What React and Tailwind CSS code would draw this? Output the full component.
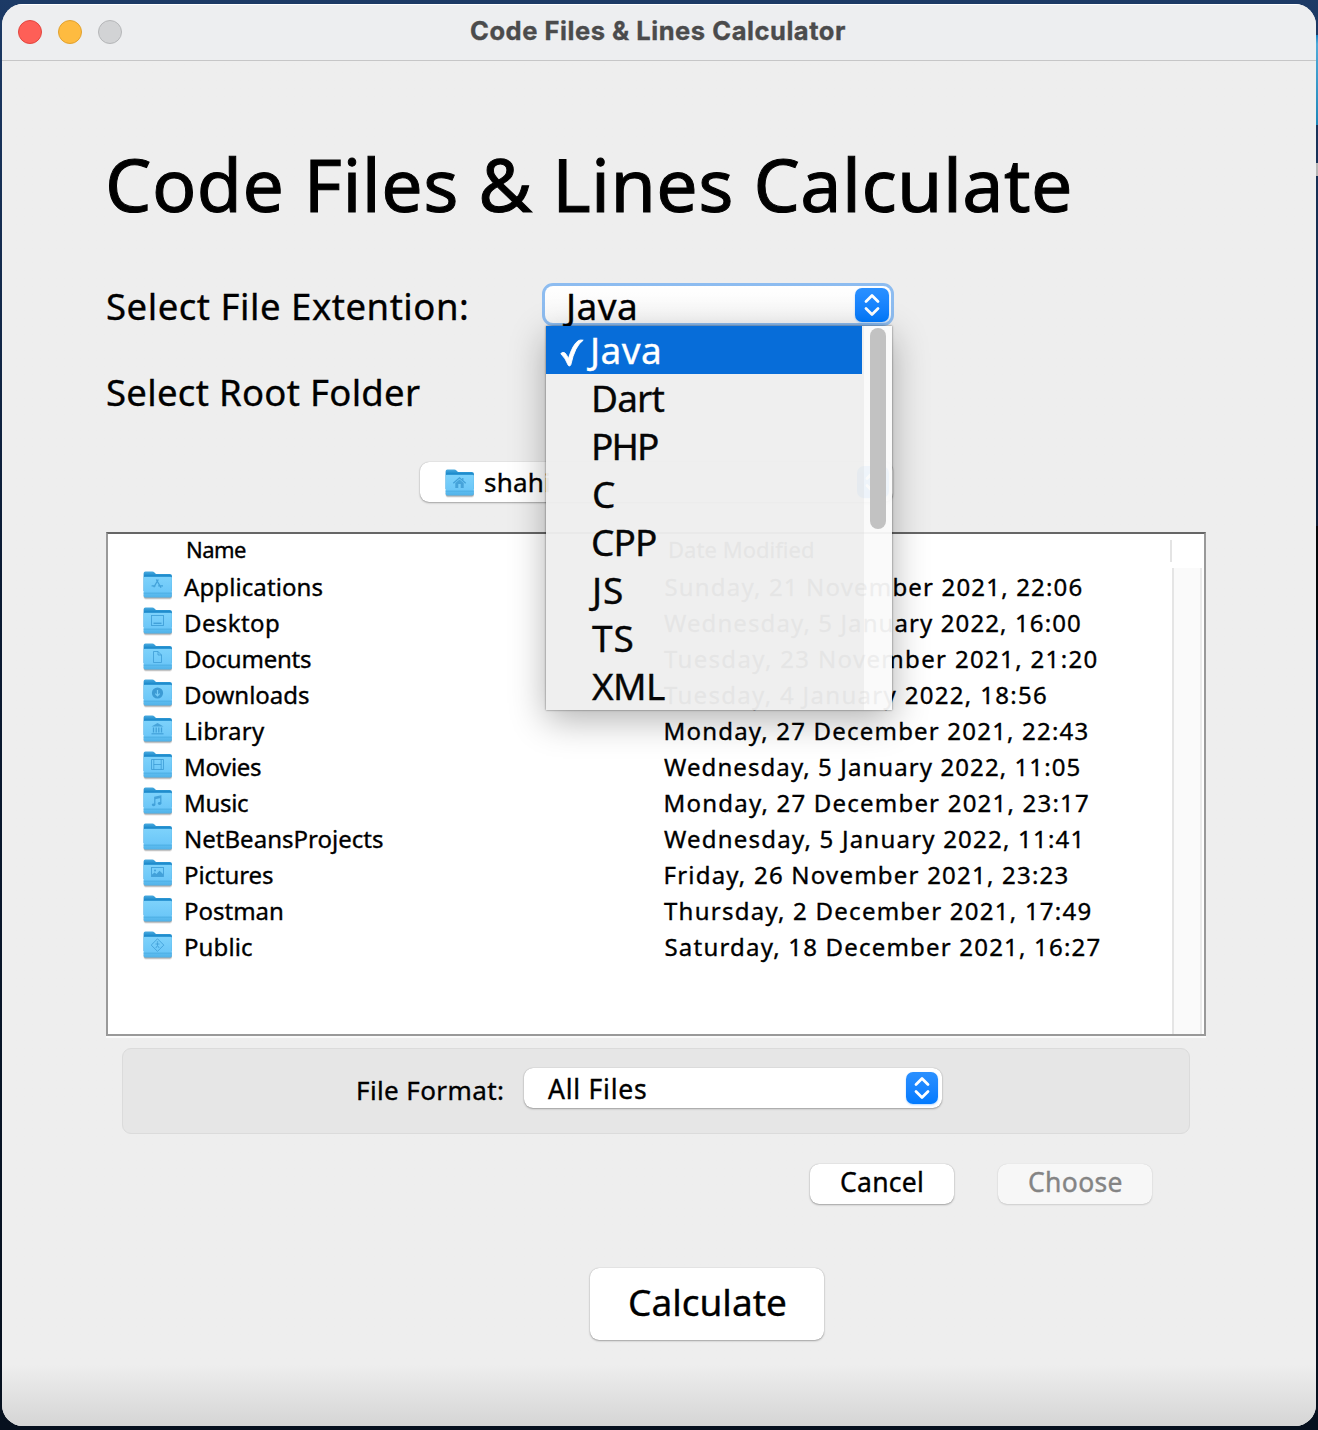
import React, { useLayoutEffect, useRef, useState } from "react";

/* A line of text whose letters are tracked so that it spans the given width. */
function Fit({ w, className = "", children }) {
  const ref = useRef(null);
  const [fit, setFit] = useState({ letterSpacing: 0, marginLeft: 0 });
  useLayoutEffect(() => {
    const cs = getComputedStyle(ref.current);
    const ctx = document.createElement("canvas").getContext("2d");
    ctx.font = `${cs.fontWeight} ${cs.fontSize} ${cs.fontFamily}`;
    const m = ctx.measureText(children);
    const ink = m.actualBoundingBoxLeft + m.actualBoundingBoxRight;
    const n = children.length - 1;
    setFit({
      letterSpacing: n > 0 ? (w - ink) / n : 0,
      marginLeft: m.actualBoundingBoxLeft,
    });
  }, [w, children]);
  return (
    <span
      ref={ref}
      className={"block shrink-0 whitespace-pre " + className}
      style={{ ...fit, width: w }}
    >
      {children}
    </span>
  );
}

const symbols = {
  apps: (
    <g strokeWidth="1.3">
      <path d="M15.3 8.5 L10.8 16.3 M13.3 8.5 L18 16.8 M8.6 14.8 H12.6 M15.2 14.8 H20" />
    </g>
  ),
  desktop: (
    <g>
      <rect x="8.5" y="8.5" width="12" height="10" />
      <path d="M10.5 16.3 H18.5" strokeWidth="1.4" />
    </g>
  ),
  document: <path d="M10.5 8.5 H15 L18.5 12 V19.5 H10.5 Z M15 8.5 V12 H18.5" />,
  download: (
    <g>
      <circle cx="14.5" cy="14" r="5.6" fill="#3393ce" stroke="none" />
      <path d="M14.5 11 V16.5 M12.3 14.6 L14.5 16.8 L16.7 14.6" stroke="#78cdf8" strokeWidth="1.2" />
    </g>
  ),
  library: (
    <g>
      <path d="M8.5 11.5 L14.5 8 L20.5 11.5 Z" fill="#3f9dd5" stroke="none" />
      <path d="M10.5 12.5 V17.5 M13.2 12.5 V17.5 M15.8 12.5 V17.5 M18.5 12.5 V17.5" strokeWidth="1.3" />
      <path d="M8.5 18.8 H20.5" strokeWidth="1.2" />
    </g>
  ),
  movies: (
    <path d="M8.5 8.5 H20.5 V18.5 H8.5 Z M10.8 8.5 V18.5 M18.2 8.5 V18.5 M10.8 13.5 H18.2" />
  ),
  music: (
    <g>
      <path d="M11.8 17.5 V10.3 L17.8 9 V16.2" strokeWidth="1.2" />
      <path d="M11.8 11.4 L17.8 10.1" strokeWidth="1.6" />
      <ellipse cx="10.6" cy="17.8" rx="1.8" ry="1.4" fill="#3a9ad4" stroke="none" />
      <ellipse cx="16.6" cy="16.5" rx="1.8" ry="1.4" fill="#3a9ad4" stroke="none" />
    </g>
  ),
  pictures: (
    <g>
      <rect x="8.5" y="8.5" width="12" height="9" />
      <path d="M9 17.5 V15.5 L11.5 13.5 L13.5 15 L16.5 11.8 L20 15 V17.5 Z" fill="#3a9ad4" stroke="none" />
      <circle cx="12" cy="11.5" r="1" fill="#3a9ad4" stroke="none" />
    </g>
  ),
  public: (
    <g>
      <path d="M14.5 7.8 L20.8 14.1 L14.5 20.4 L8.2 14.1 Z" />
      <circle cx="14.5" cy="11" r="0.8" fill="#3a9ad4" stroke="none" />
      <path d="M12.5 13 H16.5 M14.5 12 V14.5 L12.8 17 M14.5 14.5 L16.2 17" strokeWidth="0.9" />
    </g>
  ),
  home: (
    <g>
      <path d="M8.3 14.2 L14.5 8.8 L20.7 14.2" strokeWidth="1.3" />
      <path d="M10.3 14 L14.5 10.4 L18.7 14 V19 H10.3 Z" fill="#3f9dd5" stroke="none" />
      <path d="M17.8 9 V11.2" strokeWidth="1.2" />
      <rect x="13.3" y="15" width="2.4" height="4" fill="#78cdf8" stroke="none" />
    </g>
  ),
};

function Folder({ kind }) {
  return (
    <svg width="30" height="30" viewBox="0 0 30 30" className="block shrink-0">
      <defs>
        <linearGradient id="folderBack" x1="0" y1="0" x2="0" y2="1">
          <stop offset="0" stopColor="#4aabe0" />
          <stop offset="0.25" stopColor="#1585c8" />
          <stop offset="1" stopColor="#1585c8" />
        </linearGradient>
        <linearGradient id="folderFront" x1="0" y1="0" x2="0" y2="1">
          <stop offset="0" stopColor="#7dd2fb" />
          <stop offset="0.72" stopColor="#6cc7f8" />
          <stop offset="0.8" stopColor="#5dbcf0" />
          <stop offset="1" stopColor="#50b2e8" />
        </linearGradient>
      </defs>
      <rect x="0.6" y="22" width="28.4" height="6.4" rx="2" fill="#000" opacity="0.12" />
      <rect x="0.8" y="22" width="28" height="5.4" rx="1.8" fill="#000" opacity="0.25" />
      <path
        d="M0.6 2.4 Q0.6 0.6 2.4 0.6 H9.3 Q10.6 0.6 11.5 1.5 L12.4 2.4 Q13.1 3 14.2 3 H26.9 Q28.9 3 28.9 4.8 V20 H0.6 Z"
        fill="url(#folderBack)"
      />
      <path
        d="M0.6 7 Q0.6 5.8 1.8 5.8 H27.7 Q28.9 5.8 28.9 7 V24.8 Q28.9 26.6 27.1 26.6 H2.4 Q0.6 26.6 0.6 24.8 Z"
        fill="url(#folderFront)"
      />
      <path d="M0.6 22.2 H28.9" stroke="#4aabe2" strokeWidth="0.8" />
      <g fill="none" stroke="#3a9ad4" strokeWidth="0.9" opacity="0.85">
        {symbols[kind]}
      </g>
    </svg>
  );
}

function Stepper({ className = "h-8 w-8" }) {
  return (
    <span
      className={
        "flex shrink-0 items-center justify-center rounded-[7px] bg-linear-to-b from-[#2a90ff] to-[#007aff] shadow-[0_1px_2px_rgba(0,122,255,0.3)] " +
        className
      }
    >
      <svg width="16" height="24" viewBox="0 0 16 24" fill="none" stroke="#fff" strokeWidth="2.8" strokeLinecap="round" strokeLinejoin="round">
        <path d="M2 8.5 L8 2.5 L14 8.5 M2 15.5 L8 21.5 L14 15.5" />
      </svg>
    </span>
  );
}

const box = "rounded-[9px] bg-white shadow-[0_0_1px_rgba(0,0,0,0.3),0_1px_2px_rgba(0,0,0,0.3)] ";

const options = [
  ["Java", "pl-[41px]", 72],
  ["Dart", "pl-[48px]", 70.5],
  ["PHP", "pl-[48px]", 64],
  ["C", "pl-[48px]", 23],
  ["CPP", "pl-[47px]", 63],
  ["JS", "pl-[43px]", 33],
  ["TS", "pl-[46px]", 40.5],
  ["XML", "pl-[46px]", 73],
];

const files = [
  ["Applications", 138.5, "apps", "Sunday, 21 November 2021, 22:06", 416],
  ["Desktop", 93, "desktop", "Wednesday, 5 January 2022, 16:00", 416],
  ["Documents", 125, "document", "Tuesday, 23 November 2021, 21:20", 432.5],
  ["Downloads", 123, "download", "Tuesday, 4 January 2022, 18:56", 382],
  ["Library", 79, "library", "Monday, 27 December 2021, 22:43", 422],
  ["Movies", 75, "movies", "Wednesday, 5 January 2022, 11:05", 415.5],
  ["Music", 62, "music", "Monday, 27 December 2021, 23:17", 422.5],
  ["NetBeansProjects", 197, "plain", "Wednesday, 5 January 2022, 11:41", 415.5],
  ["Pictures", 87, "pictures", "Friday, 26 November 2021, 23:23", 402],
  ["Postman", 96, "plain", "Thursday, 2 December 2021, 17:49", 426.5],
  ["Public", 66, "public", "Saturday, 18 December 2021, 16:27", 434],
];

function TitleBar() {
  return (
    <header className="flex h-[57px] shrink-0 items-start border-b border-t border-b-[#c6c6c7] border-t-white bg-[#edeef0] pl-4 pt-[15px]">
      <span className="h-6 w-6 rounded-full border border-[#e2463f] bg-[#fe5f57]" />
      <span className="ml-4 h-6 w-6 rounded-full border border-[#e1a12f] bg-[#febb40]" />
      <span className="ml-4 h-6 w-6 rounded-full border border-[#b5b6b8] bg-[#d2d3d5]" />
      <div className="-mt-px ml-[349px] font-[Inter,sans-serif] text-[25.5px] font-bold leading-6 text-[#4b4b4c]">
        <Fit w={374}>{"Code Files & Lines Calculator"}</Fit>
      </div>
    </header>
  );
}

function ExtensionMenu() {
  return (
    <div className="absolute left-[3px] top-[43px] z-10 flex h-[384px] w-[346px] shadow-[0_0_2px_rgba(0,0,0,0.55),0_10px_34px_rgba(0,0,0,0.3)]">
      <ul className="w-[318px] bg-[#eeeeee]/96 pr-0.5 text-[37px] leading-[48px] text-[#060606]">
        {options.map(([name, pad, w], i) => (
          <li
            key={name}
            className={"relative h-12 " + pad + (i === 0 ? " bg-[#076dd9] text-white" : "")}
          >
            {i === 0 && (
              <svg className="absolute left-[14px] top-[13px]" width="25" height="29" viewBox="0 0 25 29" fill="#fff" stroke="#fff" strokeWidth="0.9" strokeLinejoin="round">
                <path d="M0.8 14.6 Q3 12.4 5 14 Q6.8 15.8 8.4 19.6 Q12.6 5.5 18.4 1.6 Q20.6 0.6 23.2 1.2 Q14.8 7 10.8 25.8 Q9.6 28.2 8.2 26.2 Q5.6 19.4 0.8 14.6 Z" />
              </svg>
            )}
            <Fit w={w}>{name}</Fit>
          </li>
        ))}
      </ul>
      <div className="w-7 bg-[#fafafa]/95 pl-1.5 pt-0.5">
        <div className="h-[201px] w-4 rounded-full bg-[#c2c2c2]" />
      </div>
    </div>
  );
}

export default function App() {
  return (
    <div className="flex h-[1430px] w-[1318px] bg-linear-to-b from-[#1c3a66] via-[#0a1a33] via-40% to-[#06101e] font-['Noto_Sans',sans-serif] text-black [-webkit-text-stroke:0.35px_currentColor]">
      <main className="ml-0.5 mt-1 flex h-[1422px] w-[1314px] flex-col overflow-hidden rounded-[21px] bg-[#eeeeee]">
        <TitleBar />

        <div className="flex grow flex-col bg-linear-to-b from-[#eeeeee] from-[95.5%] to-[#d5d5d5] pl-[104px] pt-[73px]">
          <h1 className="pl-[3px] text-[73.5px] leading-[100px] [-webkit-text-stroke:1px_currentColor]">
            <Fit w={960}>{"Code Files & Lines Calculate"}</Fit>
          </h1>

          <div className="mt-[49px] flex h-[43px]">
            <div className="w-[436px] pl-[1px] pt-[3px] text-[36.5px] leading-10">
              <Fit w={360}>Select File Extention:</Fit>
            </div>
            <div className="relative h-[43px] w-[352px] rounded-[11px] border-[3px] border-[#8dbcf0] bg-[#8dbcf0]">
              <div className="flex h-[37px] items-center rounded-[8px] bg-linear-to-b from-white to-[#f7f7f7] pl-[18px] pr-[2px]">
                <div className="grow pt-0.5 text-[37px] leading-[40px]">
                  <Fit w={72}>Java</Fit>
                </div>
                <Stepper className="h-[34px] w-[34px]" />
              </div>
              <div className="absolute -left-[2px] -top-[3px]">
                <ExtensionMenu />
              </div>
            </div>
          </div>

          <div className="mt-[46px] pl-[1px] text-[36.5px] leading-10">
            <Fit w={313}>Select Root Folder</Fit>
          </div>

          <div className={box + "ml-[314px] mt-[50px] flex h-10 w-[473px] items-center pl-[25px] pr-1"}>
            <div className="pt-[3px]">
              <Folder kind="home" />
            </div>
            <div className="ml-[10px] grow text-[26px] leading-10">
              <Fit w={64}>shahi</Fit>
            </div>
            <Stepper />
          </div>

          <section className="mt-[30px] flex h-[504px] w-[1100px] flex-col border-2 border-[#999] border-t-[#666] bg-white shadow-[0_2px_0_#fafafa]">
            <div className="flex h-[34px] shrink-0 text-[22px] leading-[31px]">
              <div className="w-[482px] pl-20">
                <Fit w={58}>Name</Fit>
              </div>
              <div className="w-[580px] pl-20">
                <Fit w={143}>Date Modified</Fit>
              </div>
              <div className="mt-1.5 h-[22px] w-0.5 bg-[#e4e4e4]" />
            </div>
            <div className="flex grow">
              <ul className="w-[1064px] text-[24px] leading-[38px]">
                {files.map(([name, w, kind, date, dw]) => (
                  <li key={name} className="flex h-9">
                    <div className="flex w-[556px] pl-[35px]">
                      <div className="pt-[3px]">
                        <Folder kind={kind} />
                      </div>
                      <div className={name === "Applications" ? "pl-[11px]" : "pl-[13px]"}>
                        <Fit w={w}>{name}</Fit>
                      </div>
                    </div>
                    <div className={/^[MFS]/.test(date) ? "pl-[1.5px]" : ""}>
                      <Fit w={dw}>{date}</Fit>
                    </div>
                  </li>
                ))}
              </ul>
              <div className="w-[30px] border-x-2 border-l-[#e5e5e5] border-r-[#ebebeb] bg-[#fafafa]" />
            </div>
          </section>

          <section className="ml-4 mt-3 flex h-[86px] w-[1068px] rounded-[9px] border border-[#dbdbdb] bg-[#e6e6e6] pl-[235px] pt-[19px]">
            <div className="mt-[2px] w-[166px] text-[26px] leading-10">
              <Fit w={145}>File Format:</Fit>
            </div>
            <div className={box + "flex h-10 w-[418px] items-center pl-6 pr-1"}>
              <div className="grow pt-px text-[26.5px] leading-10">
                <Fit w={98}>All Files</Fit>
              </div>
              <Stepper />
            </div>
          </section>

          <div className="ml-[704px] mt-[30px] flex gap-11 text-[26.5px] leading-[37px]">
            <button className={box + "h-10 w-36 pb-[3px] pl-[31px] text-left"}>
              <Fit w={81}>Cancel</Fit>
            </button>
            <button className="h-10 w-[154px] rounded-[9px] bg-[#f7f7f7] pb-[3px] pl-[31px] text-left text-[#848484] shadow-[0_0_1px_rgba(0,0,0,0.15),0_1px_2px_rgba(0,0,0,0.13)]">
              <Fit w={92.5}>Choose</Fit>
            </button>
          </div>

          <button className={box + "ml-[484px] mt-16 h-[72px] w-[234px] pb-1 pl-10 text-left text-[37px] leading-[68px]"}>
            <Fit w={155}>Calculate</Fit>
          </button>
        </div>
      </main>
      <div className="flex w-0.5 flex-col pt-[35px]">
        <div className="h-[90px] bg-linear-to-b from-[#0c7fc0] via-[#4fa9d8] via-10% to-[#1a86b8]" />
        <div className="mt-[38px] h-[13px] bg-[#b5b5b5]" />
        <div className="mt-[350px] h-[114px] bg-[#05070b]" />
      </div>
    </div>
  );
}
